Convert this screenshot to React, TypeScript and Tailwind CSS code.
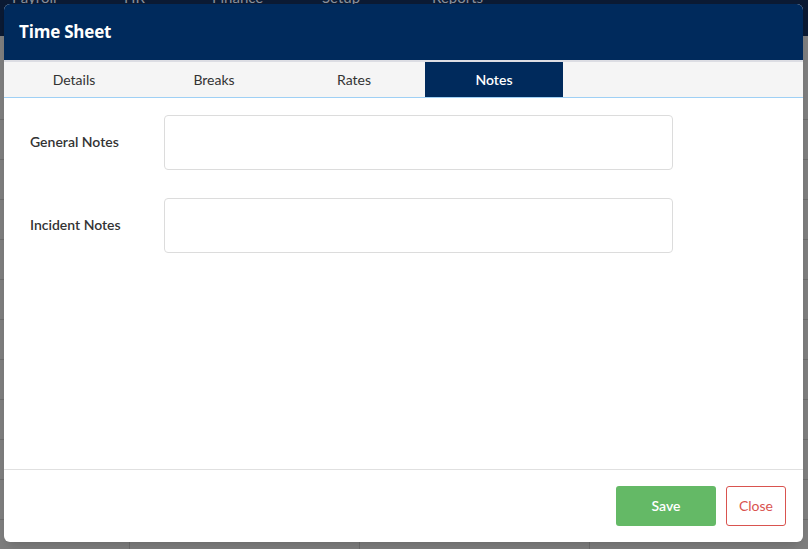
import { useState } from "react";

const tabs = ["Details", "Breaks", "Rates", "Notes"];
const navItems = [
  { label: "Payroll", left: "left-[12px]" },
  { label: "HR", left: "left-[124px]" },
  { label: "Finance", left: "left-[212px]" },
  { label: "Setup", left: "left-[322px]" },
  { label: "Reports", left: "left-[432px]" },
];

function BackgroundPage() {
  return (
    <div className="absolute inset-0 flex flex-col">
      <div className="relative h-[36px] shrink-0 overflow-hidden bg-[#0b1a33]">
        {navItems.map((item) => (
          <span
            key={item.label}
            className={`absolute top-[-13px] ${item.left} text-[15px] leading-[20px] text-[#8a8f99]`}
          >
            {item.label}
          </span>
        ))}
      </div>
      <div className="flex-1 bg-[#7f7f7f]">
        <div className="h-[84px] border-b border-[#6e6e6e]" />
        {Array.from({ length: 11 }).map((_, i) => (
          <div key={i} className="grid h-[40px] grid-cols-[130px_230px_230px_1fr] border-b border-[#6e6e6e]">
            <div className="border-r border-[#6e6e6e]" />
            <div className="border-r border-[#6e6e6e]" />
            <div className="border-r border-[#6e6e6e]" />
            <div />
          </div>
        ))}
      </div>
    </div>
  );
}

function NoteField({ label }: { label: string }) {
  return (
    <div className="flex items-center">
      <label className="w-[160px] pb-[3px] pl-[26px] text-[14px] font-semibold text-[#333]">{label}</label>
      <textarea className="h-[55px] w-[509px] resize-none rounded-[4px] border border-[#dcdcdc] bg-white outline-none" />
    </div>
  );
}

export default function App() {
  const [activeTab, setActiveTab] = useState("Notes");

  return (
    <div
      className="relative h-[549px] w-full overflow-hidden"
      style={{ fontFamily: "Lato, 'Open Sans', sans-serif" }}
    >
      <BackgroundPage />
      <div className="absolute left-[4px] top-[4px] flex h-[538px] w-[799px] flex-col overflow-hidden rounded-[6px] bg-white shadow-lg">
        <div className="flex h-[56px] shrink-0 items-center bg-[#002a5c] pl-[15px]">
          <h1
            className="text-[17px] font-bold tracking-[-0.2px] text-white"
            style={{ fontFamily: "'Open Sans', Lato, sans-serif" }}
          >
            Time Sheet
          </h1>
        </div>
        <div className="flex h-[38px] shrink-0 border-t-2 border-b border-t-[#dcdde3] border-b-[#9fd0f5] bg-[#f5f5f5]">
          {tabs.map((tab) => (
            <button
              key={tab}
              type="button"
              onClick={() => setActiveTab(tab)}
              className={
                tab === activeTab
                  ? "ml-px w-[138px] bg-[#002a5c] text-[14px] font-semibold text-white"
                  : "w-[140px] text-[14px] text-[#333]"
              }
            >
              {tab}
            </button>
          ))}
        </div>
        <div className="flex flex-1 flex-col gap-[28px] pt-[17px]">
          <NoteField label="General Notes" />
          <NoteField label="Incident Notes" />
        </div>
        <div className="flex h-[73px] shrink-0 items-start justify-end gap-[10px] border-t border-[#e0e0e0] pr-[17px] pt-[16px]">
          <button
            type="button"
            className="h-[40px] w-[100px] rounded-[3px] bg-[#64b966] pb-px text-[14px] font-semibold text-white"
          >
            Save
          </button>
          <button
            type="button"
            className="h-[40px] w-[60px] rounded-[3px] border border-[#d9534f] bg-white pb-px text-[14px] text-[#d9534f]"
          >
            Close
          </button>
        </div>
      </div>
    </div>
  );
}
